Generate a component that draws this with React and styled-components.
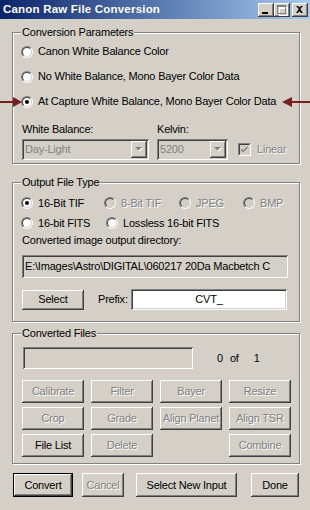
import React from 'react';
import styled, { createGlobalStyle, css } from 'styled-components';

const Global = createGlobalStyle`
  html, body { margin: 0; padding: 0; background: #D4D0C8; }
  body { font-family: "Liberation Sans", Arial, sans-serif; font-size: 11px; color: #000; }
  * { box-sizing: border-box; }
`;

const FACE = '#D4D0C8';

const raised = css`
  background: ${FACE};
  box-shadow: inset -1px -1px 0 #404040, inset 1px 1px 0 #fff, inset -2px -2px 0 #808080, inset 2px 2px 0 ${FACE};
`;
const sunken = css`
  box-shadow: inset 1px 1px 0 #808080, inset -1px -1px 0 #fff, inset 2px 2px 0 #404040, inset -2px -2px 0 ${FACE};
`;
const disabledText = css`
  color: #808080;
  text-shadow: 1px 1px 0 #fff;
`;

const Window = styled.div`
  position: relative;
  width: 310px;
  height: 510px;
  overflow: hidden;
  background: ${FACE};
  display: flex;
  flex-direction: column;
  font-family: "Liberation Sans", Arial, sans-serif;
  font-size: 11px;
  letter-spacing: -0.2px;
  line-height: 13px;
`;

const TitleBar = styled.div`
  flex: none;
  height: 19px;
  display: flex;
  align-items: center;
  padding: 0 2px 0 3px;
  background: linear-gradient(to right, #0A246A, #A6CAF0);
`;

const Title = styled.div`
  flex: 1;
  color: #fff;
  font-weight: bold;
  font-size: 11.5px;
  letter-spacing: 0.2px;
  line-height: 19px;
  white-space: nowrap;
`;

const CaptionButton = styled.div`
  ${raised};
  width: 16px;
  height: 14px;
  margin-left: ${p => p.$ml || 0}px;
  display: flex;
`;

const Body = styled.div`
  flex: 1;
  display: flex;
  flex-direction: column;
  padding: 13px 10px 0 12px;
`;

const Group = styled.div`
  flex: none;
  height: ${p => p.$h}px;
  margin-top: ${p => p.$mt || 0}px;
  border: 1px solid #808080;
  box-shadow: inset 1px 1px 0 #fff, 1px 1px 0 #fff;
  display: flex;
  flex-direction: column;
  padding: 0 0 0 8px;
`;

const Legend = styled.div`
  align-self: flex-start;
  height: 13px;
  margin-top: -7px;
  padding: 0 1px;
  background: ${FACE};
  white-space: nowrap;
`;

const OptionRow = styled.div`
  display: flex;
  align-items: center;
  height: ${p => p.$h}px;
  margin-top: ${p => p.$mt || 0}px;
`;

const Option = styled.label`
  display: flex;
  align-items: center;
  gap: 5px;
  width: ${p => (p.$w ? `${p.$w}px` : 'auto')};
  flex: none;
  white-space: nowrap;
  ${p => p.$disabled && disabledText};
`;

const RadioCircle = styled.span`
  position: relative;
  flex: none;
  width: 12px;
  height: 12px;
  border-radius: 50%;
  border: 1px solid;
  border-color: #808080 #fff #fff #808080;
  &::before {
    content: '';
    position: absolute;
    inset: 0;
    border-radius: 50%;
    border: 1px solid;
    border-color: #404040 ${FACE} ${FACE} #404040;
    background: ${p => (p.$disabled ? FACE : '#fff')};
  }
  &::after {
    content: '';
    display: ${p => (p.$checked ? 'block' : 'none')};
    position: absolute;
    left: 3px;
    top: 3px;
    width: 4px;
    height: 4px;
    border-radius: 50%;
    background: #000;
  }
`;

const Fields = styled.div`
  display: grid;
  grid-template-columns: 127px 71px auto;
  column-gap: 8px;
  row-gap: 3px;
  margin: 9px 0 0 1px;
  align-items: center;
`;

const Combo = styled.div`
  height: 21px;
  display: flex;
  align-items: center;
  padding: 2px;
  background: ${FACE};
  ${sunken};
`;

const ComboText = styled.span`
  flex: 1;
  padding-left: 1px;
  color: #808080;
`;

const DropButton = styled.span`
  ${raised};
  flex: none;
  width: 16px;
  height: 17px;
  display: flex;
  align-items: center;
  justify-content: center;
`;

const CheckOption = styled.label`
  display: flex;
  align-items: center;
  gap: 6px;
  margin-left: 2px;
  ${disabledText};
`;

const CheckBox = styled.span`
  position: relative;
  flex: none;
  width: 13px;
  height: 13px;
  border: 1px solid;
  border-color: #808080 #fff #fff #808080;
  &::before {
    content: '';
    position: absolute;
    inset: 0;
    border: 1px solid;
    border-color: #404040 ${FACE} ${FACE} #404040;
    background: ${FACE};
  }
  svg { position: absolute; left: 1px; top: 1px; }
`;

const Label = styled.div`
  height: 13px;
  margin: ${p => p.$m || '0'};
  white-space: nowrap;
`;

const TextField = styled.div`
  height: ${p => p.$h}px;
  width: ${p => p.$w}px;
  flex: none;
  margin: ${p => p.$m || '0'};
  padding: 0 3px;
  display: flex;
  align-items: center;
  justify-content: ${p => (p.$center ? 'center' : 'flex-start')};
  background: ${p => (p.$white ? '#fff' : FACE)};
  white-space: nowrap;
  overflow: hidden;
  ${sunken};
`;

const ControlRow = styled.div`
  display: flex;
  align-items: center;
  margin: ${p => p.$m || '0'};
  height: ${p => p.$h}px;
`;

const Button = styled.button`
  ${raised};
  flex: none;
  font: inherit;
  letter-spacing: inherit;
  color: #000;
  border: none;
  padding: 0;
  width: ${p => (p.$w ? `${p.$w}px` : 'auto')};
  height: ${p => (p.$h ? `${p.$h}px` : '100%')};
  margin-left: ${p => p.$ml || 0}px;
  display: flex;
  align-items: center;
  justify-content: center;
  white-space: nowrap;
  ${p => p.disabled && disabledText};
  ${p => p.$default && css`
    border: 1px solid #000;
  `};
`;

const PrefixLabel = styled.span`
  width: 33px;
  margin-left: 14px;
  flex: none;
`;

const Count = styled.span`
  margin-left: ${p => p.$ml}px;
`;

const ButtonGrid = styled.div`
  display: grid;
  grid-template-columns: repeat(4, 62px);
  grid-auto-rows: 23px;
  column-gap: 7px;
  row-gap: 4px;
  margin: 11px 0 0 1px;
`;

const BottomRow = styled.div`
  display: flex;
  height: 24px;
  margin: 9px 0 0 1px;
`;

const Arrow = styled.svg`
  position: absolute;
  top: 96px;
  left: ${p => p.$x}px;
`;

const Radio = ({ checked, disabled, w, children }) => (
  <Option $w={w} $disabled={disabled}>
    <RadioCircle $checked={checked} $disabled={disabled} />
    <span>{children}</span>
  </Option>
);

const DropArrow = () => (
  <svg width="8" height="5" viewBox="0 0 8 5">
    <path d="M1 1h7l-3.5 3.5z" fill="#fff" />
    <path d="M0 0h7l-3.5 3.5z" fill="#808080" />
  </svg>
);

export default function App() {
  return (
    <>
      <Global />
      <Window>
        <TitleBar>
          <Title>Canon Raw File Conversion</Title>
          <CaptionButton>
            <svg width="16" height="14" viewBox="0 0 16 14">
              <rect x="4" y="9" width="6" height="2" fill="#000" />
            </svg>
          </CaptionButton>
          <CaptionButton>
            <svg width="16" height="14" viewBox="0 0 16 14">
              <path d="M4 3h9v9H4z M5 5v6h7V5z" fill="#fff" fillRule="evenodd" transform="translate(1 1)" />
              <path d="M3 2h9v9H3z M4 4v6h7V4z" fill="#808080" fillRule="evenodd" />
            </svg>
          </CaptionButton>
          <CaptionButton $ml={2}>
            <svg width="16" height="14" viewBox="0 0 16 14">
              <path d="M4 3h2l1.5 1.5L9 3h2L8.5 5.5v1L11 10H9L7.5 8 6 10H4l2.5-3.5v-1z" fill="#000" />
            </svg>
          </CaptionButton>
        </TitleBar>

        <Body>
          <Group $h={132}>
            <Legend>Conversion Parameters</Legend>
            <OptionRow $h={25}>
              <Radio>Canon White Balance Color</Radio>
            </OptionRow>
            <OptionRow $h={25}>
              <Radio>No White Balance, Mono Bayer Color Data</Radio>
            </OptionRow>
            <OptionRow $h={25}>
              <Radio checked>At Capture White Balance, Mono Bayer Color Data</Radio>
            </OptionRow>
            <Fields>
              <Label>White Balance:</Label>
              <Label>Kelvin:</Label>
              <span />
              <Combo>
                <ComboText>Day-Light</ComboText>
                <DropButton><DropArrow /></DropButton>
              </Combo>
              <Combo>
                <ComboText>5200</ComboText>
                <DropButton><DropArrow /></DropButton>
              </Combo>
              <CheckOption>
                <CheckBox>
                  <svg width="9" height="9" viewBox="0 0 9 9">
                    <path d="M1 3.5l2 2 4.5-4.5v2L3 7.5l-2-2z" fill="#808080" />
                  </svg>
                </CheckBox>
                <span>Linear</span>
              </CheckOption>
            </Fields>
          </Group>

          <Group $h={140} $mt={18}>
            <Legend>Output File Type</Legend>
            <OptionRow $h={20} $mt={4}>
              <Radio checked w={83}>16-Bit TIF</Radio>
              <Radio disabled w={75}>8-Bit TIF</Radio>
              <Radio disabled w={64}>JPEG</Radio>
              <Radio disabled>BMP</Radio>
            </OptionRow>
            <OptionRow $h={20}>
              <Radio w={85}>16-bit FITS</Radio>
              <Radio>Lossless 16-bit FITS</Radio>
            </OptionRow>
            <Label $m="1px 0 0 1px">Converted image output directory:</Label>
            <TextField $h={23} $w={266} $m="8px 0 0 1px">
              E:\Images\Astro\DIGITAL\060217 20Da Macbetch C
            </TextField>
            <ControlRow $h={21} $m="11px 0 0 1px">
              <Button $w={62} $h={20}>Select</Button>
              <PrefixLabel>Prefix:</PrefixLabel>
              <TextField $h={21} $w={156} $white $center>CVT_</TextField>
            </ControlRow>
          </Group>

          <Group $h={131} $mt={11}>
            <Legend>Converted Files</Legend>
            <ControlRow $h={22} $m="7px 0 0 2px">
              <TextField $h={22} $w={170} />
              <Count $ml={24}>0</Count>
              <Count $ml={7}>of</Count>
              <Count $ml={15}>1</Count>
            </ControlRow>
            <ButtonGrid>
              <Button disabled>Calibrate</Button>
              <Button disabled>Filter</Button>
              <Button disabled>Bayer</Button>
              <Button disabled>Resize</Button>
              <Button disabled>Crop</Button>
              <Button disabled>Grade</Button>
              <Button disabled>Align Planet</Button>
              <Button disabled>Align TSR</Button>
              <Button>File List</Button>
              <Button disabled>Delete</Button>
              <span />
              <Button disabled>Combine</Button>
            </ButtonGrid>
          </Group>

          <BottomRow>
            <Button $default $w={60}>Convert</Button>
            <Button disabled $w={42} $ml={9}>Cancel</Button>
            <Button $w={101} $ml={12}>Select New Input</Button>
            <Button $w={48} $ml={14}>Done</Button>
          </BottomRow>
        </Body>

        <Arrow $x={0} width="24" height="12" viewBox="0 0 24 12">
          <rect x="0" y="5" width="15" height="2" fill="#7A1F1F" />
          <path d="M13 1l9 5-9 5z" fill="#7A1F1F" />
        </Arrow>
        <Arrow $x={280} width="30" height="12" viewBox="0 0 30 12">
          <rect x="10" y="5" width="20" height="2" fill="#7A1F1F" />
          <path d="M2 6l10-5v10z" fill="#7A1F1F" />
        </Arrow>
      </Window>
    </>
  );
}
